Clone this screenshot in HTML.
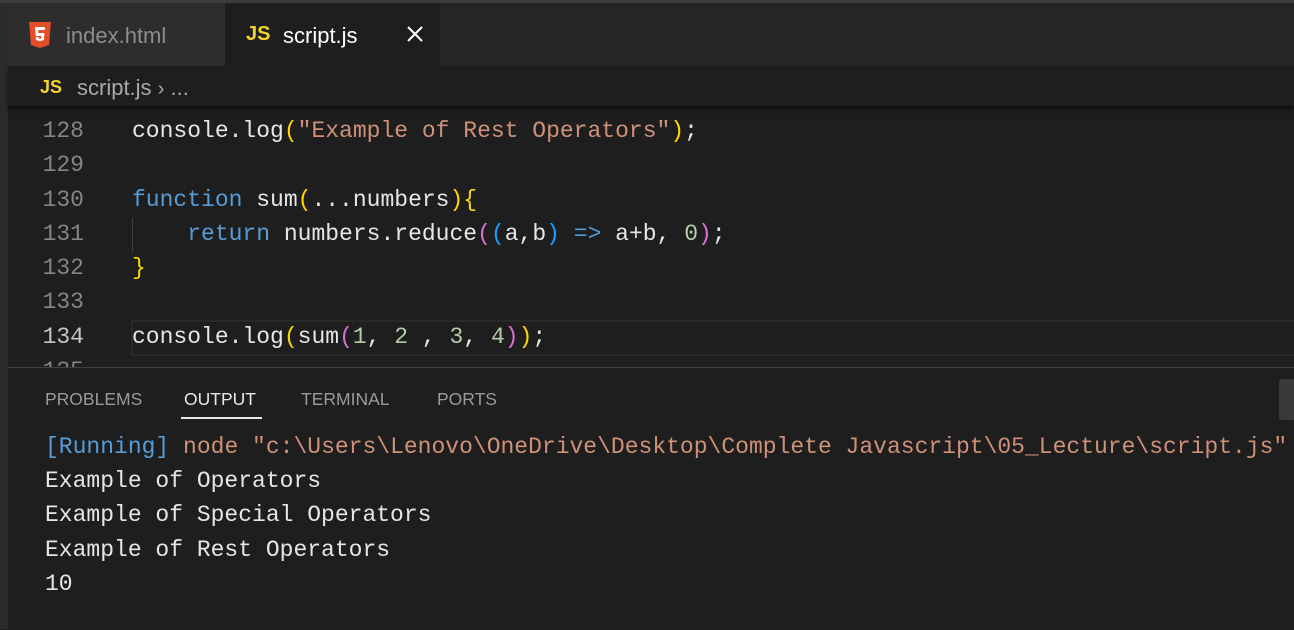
<!DOCTYPE html>
<html><head><style>
body{margin:0;width:1294px;height:629px;background:#1e1e1e;overflow:hidden;position:relative;font-family:"Liberation Sans",sans-serif}
.a{position:absolute}
.code{font-family:"Liberation Mono",monospace;font-size:23px;white-space:pre;color:#e6e6e6;line-height:34px}
.ln{color:#858585;width:84px;text-align:right;left:0}
.k{color:#569cd6}.s{color:#ce9178}.n{color:#b5cea8}.y{color:#ffd700}.p{color:#da70d6}.b{color:#179fff}
.out{font-family:"Liberation Mono",monospace;font-size:23px;white-space:pre;color:#e6e6e6;line-height:34px;left:45px}
</style></head><body>
<div class="a" style="left:0;top:0;width:1294px;height:3px;background:#3c3c3c"></div>
<div class="a" style="left:0;top:3px;width:8px;height:626px;background:#2b2b2b"></div>
<div class="a" style="left:8px;top:3px;width:1286px;height:63px;background:#252526"></div>
<div class="a" style="left:8px;top:3px;width:217px;height:63px;background:#2d2d2d"></div>
<div class="a" style="left:225px;top:3px;width:215px;height:63px;background:#1e1e1e"></div>
<svg class="a" style="left:29px;top:22px" width="22" height="26" viewBox="0 0 22 26"><path d="M0 0h22l-2 23-9 3-9-3z" fill="#e44d26"/><path d="M6 5h10l-.3 3H9.3l.2 3h6l-.6 7-4 1.3-4-1.3-.2-3h3l.1 1.4 1.2.4 1.3-.4.2-2.4H6.7z" fill="#fff"/></svg>
<div class="a" style="left:66px;top:23px;font-size:22px;color:#8d8d8d">index.html</div>
<div class="a" style="left:246px;top:23px;font-size:20px;font-weight:bold;color:#f1d32e">JS</div>
<div class="a" style="left:283px;top:23px;font-size:22px;color:#fff">script.js</div>
<svg class="a" style="left:406px;top:25px" width="18" height="18"><path d="M2 2L16 16M16 2L2 16" stroke="#fff" stroke-width="2"/></svg>
<div class="a" style="left:8px;top:66px;width:1286px;height:40px;background:#1e1e1e;box-shadow:0 3px 4px #0008"></div>
<div class="a" style="left:40px;top:77px;font-size:18px;font-weight:bold;color:#f1d32e">JS</div>
<div class="a" style="left:77px;top:75px;font-size:22px;color:#a9a9a9">script.js <span style="font-size:20px">›</span> ...</div>
<div class="a" style="left:131px;top:320px;width:1170px;height:32px;border:2px solid #282828"></div>
<div class="a" style="left:132px;top:218px;width:1px;height:34px;background:#404040"></div>
<div class="a code ln" style="top:114px">128</div>
<div class="a code ln" style="top:148px">129</div>
<div class="a code ln" style="top:183px">130</div>
<div class="a code ln" style="top:217px">131</div>
<div class="a code ln" style="top:251px">132</div>
<div class="a code ln" style="top:285px">133</div>
<div class="a code ln" style="top:320px;color:#c6c6c6">134</div>
<div class="a code ln" style="top:354px">135</div>
<div class="a code" style="left:132px;top:114px">console.log<span class="y">(</span><span class="s">"Example of Rest Operators"</span><span class="y">)</span>;</div>
<div class="a code" style="left:132px;top:183px"><span class="k">function</span> sum<span class="y">(</span>...numbers<span class="y">){</span></div>
<div class="a code" style="left:132px;top:217px">    <span class="k">return</span> numbers.reduce<span class="p">(</span><span class="b">(</span>a,b<span class="b">)</span> <span class="k">=&gt;</span> a+b, <span class="n">0</span><span class="p">)</span>;</div>
<div class="a code" style="left:132px;top:251px"><span class="y">}</span></div>
<div class="a code" style="left:132px;top:320px">console.log<span class="y">(</span>sum<span class="p">(</span><span class="n">1</span>, <span class="n">2</span> , <span class="n">3</span>, <span class="n">4</span><span class="p">)</span><span class="y">)</span>;</div>
<div class="a" style="left:8px;top:367px;width:1286px;height:262px;background:#1e1e1e;border-top:1px solid #414141"></div>
<div class="a" style="left:45px;top:389px;font-size:17.5px;color:#9a9a9a">PROBLEMS</div>
<div class="a" style="left:184px;top:389px;font-size:17.5px;color:#e7e7e7">OUTPUT</div>
<div class="a" style="left:181px;top:417px;width:81px;height:2px;background:#e7e7e7"></div>
<div class="a" style="left:301px;top:389px;font-size:17.5px;color:#9a9a9a">TERMINAL</div>
<div class="a" style="left:437px;top:389px;font-size:17.5px;color:#9a9a9a">PORTS</div>
<div class="a" style="left:1279px;top:379px;width:15px;height:41px;background:#3a3a3a;border-radius:3px 0 0 3px"></div>
<div class="a out" style="top:430px"><span style="color:#569cd6">[Running]</span> <span class="s">node "c:\Users\Lenovo\OneDrive\Desktop\Complete Javascript\05_Lecture\script.js"</span></div>
<div class="a out" style="top:464px">Example of Operators</div>
<div class="a out" style="top:498px">Example of Special Operators</div>
<div class="a out" style="top:533px">Example of Rest Operators</div>
<div class="a out" style="top:567px">10</div>
</body></html>
